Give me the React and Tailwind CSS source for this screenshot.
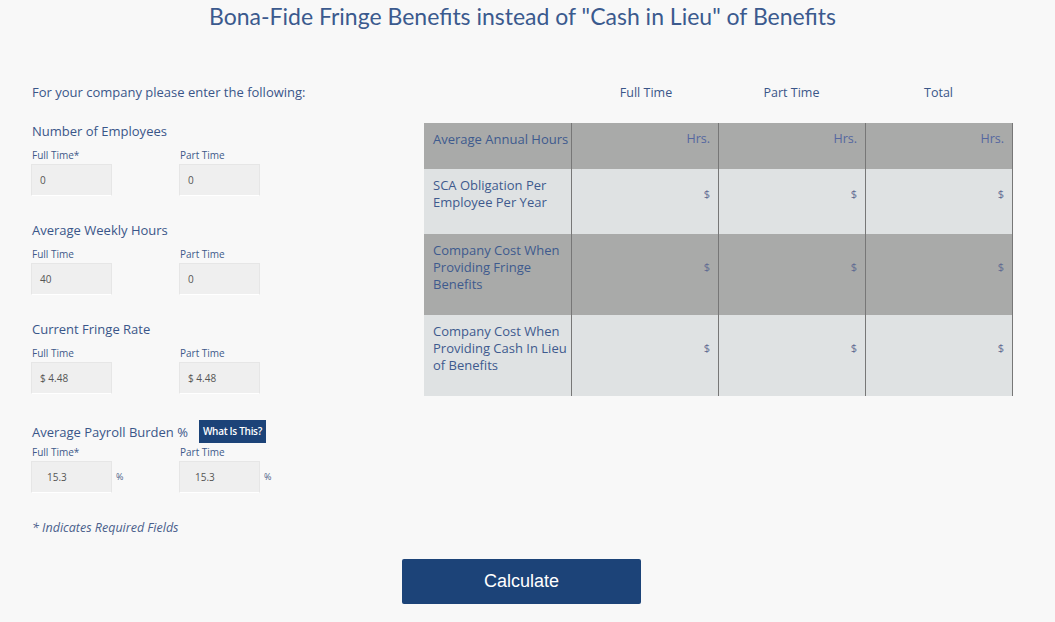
import React from "react";

const sans = { fontFamily: '"Open Sans", "Liberation Sans", sans-serif' };

function Field({ label, value, pct, wide }) {
  return (
    <div className="flex flex-col w-[148px]">
      <div className="text-[10px] leading-[14px] text-[#3f5a8a] pl-[1px]">{label}</div>
      <div className="mt-[2px] flex items-center">
        <div className={`w-[81px] h-[32px] bg-[#efefef] border border-[#e6e6e6] border-b-white flex items-center text-[10px] text-[#555] ${wide ? "pl-[15px]" : "pl-[8px]"}`}>
          {value}
        </div>
        {pct && <span className="ml-[4px] text-[9px] text-[#4a5f88]">%</span>}
      </div>
    </div>
  );
}

function Section({ title, items, extra }) {
  return (
    <div className="flex flex-col">
      {extra ? (
        <div className="flex items-center h-[23px] gap-[11px]">
          <div className="text-[13px] leading-[16px] text-[#3a5689]">{title}</div>
          {extra}
        </div>
      ) : (
        <div className="text-[13px] leading-[16px] text-[#3a5689]">{title}</div>
      )}
      <div className={`flex ml-[-1px] ${extra ? "mt-[2px]" : "mt-[9px]"}`}>
        {items.map((it, i) => (
          <Field key={i} {...it} />
        ))}
      </div>
    </div>
  );
}

const rows = [
  { label: ["Average Annual Hours"], unit: "Hrs.", h: "h-[46px]", lh: "h-[17px]", bg: "bg-[#a9aaa9]" },
  { label: ["SCA Obligation Per", "Employee Per Year"], unit: "$", h: "h-[65px]", lh: "h-[34px]", bg: "bg-[#dfe2e3]" },
  { label: ["Company Cost When", "Providing Fringe", "Benefits"], unit: "$", h: "h-[81px]", lh: "h-[51px]", bg: "bg-[#a9aaa9]" },
  { label: ["Company Cost When", "Providing Cash In Lieu", "of Benefits"], unit: "$", h: "h-[81px]", lh: "h-[51px]", bg: "bg-[#dfe2e3]" },
];

export default function App() {
  return (
    <div className="min-h-[622px] w-[1055px] bg-[#f8f8f8]" style={sans}>
      <h1
        className="text-center text-[23px] leading-[28px] pt-[2px] text-[#3b5a8e] pr-[10px]"
        style={{ fontFamily: 'Lato, "Liberation Sans", sans-serif' }}
      >
        Bona-Fide Fringe Benefits instead of "Cash in Lieu" of Benefits
      </h1>
      <div className="flex mt-[54px]">
        <div className="w-[424px] pl-[32px] flex flex-col">
          <div className="text-[13px] leading-[16px] text-[#3a5689]">For your company please enter the following:</div>
          <div className="mt-[23px]">
            <Section title="Number of Employees" items={[{ label: "Full Time*", value: "0" }, { label: "Part Time", value: "0" }]} />
          </div>
          <div className="mt-[26px]">
            <Section title="Average Weekly Hours" items={[{ label: "Full Time", value: "40" }, { label: "Part Time", value: "0" }]} />
          </div>
          <div className="mt-[26px]">
            <Section title="Current Fringe Rate" items={[{ label: "Full Time", value: "$ 4.48" }, { label: "Part Time", value: "$ 4.48" }]} />
          </div>
          <div className="mt-[26px]">
            <Section
              title="Average Payroll Burden %"
              extra={
                <span className="bg-[#1c4378] text-white text-[10px] font-semibold h-[23px] px-[4px] flex items-center tracking-[-0.3px]">
                  What Is This?
                </span>
              }
              items={[
                { label: "Full Time*", value: "15.3", pct: true, wide: true },
                { label: "Part Time", value: "15.3", pct: true, wide: true },
              ]}
            />
          </div>
          <div className="mt-[27px] text-[12.5px] leading-[16px] italic text-[#4a5f8c]">* Indicates Required Fields</div>
        </div>
        <div className="flex flex-col">
          <div className="flex h-[16px] mt-[1px] text-[12.5px] leading-[16px] text-[#3a5689]">
            <div className="w-[147px]" />
            <div className="w-[147px] text-center pl-[3px]">Full Time</div>
            <div className="w-[147px] text-center">Part Time</div>
            <div className="w-[147px] text-center">Total</div>
          </div>
          <div className="mt-[22px] border-r border-[#777]">
            {rows.map((r, i) => (
              <div key={i} className={`flex ${r.h} ${r.bg}`}>
                <div className="w-[147px] pl-[9px] pt-[8px] text-[13px] leading-[17px] text-[#3e5a8e] whitespace-nowrap">
                  {r.label.map((l, j) => (
                    <div key={j}>{l}</div>
                  ))}
                </div>
                {[0, 1, 2].map((c) => (
                  <div key={c} className="w-[147px] border-l border-[#777] pt-[8px] pr-[8px]">
                    <div className={`${r.lh} flex items-center justify-end ${r.unit === "Hrs." ? "text-[12.5px] text-[#5567a0]" : "text-[11px] text-[#5f6b92]"}`}>
                      {r.unit}
                    </div>
                  </div>
                ))}
              </div>
            ))}
          </div>
        </div>
      </div>
      <div className="pl-[402px] mt-[23px] pb-[18px]">
        <button
          className="w-[239px] h-[45px] bg-[#1c4378] text-white text-[18px] rounded-[2px]"
          style={{ fontFamily: '"Liberation Sans", Arial, sans-serif' }}
        >
          Calculate
        </button>
      </div>
    </div>
  );
}
